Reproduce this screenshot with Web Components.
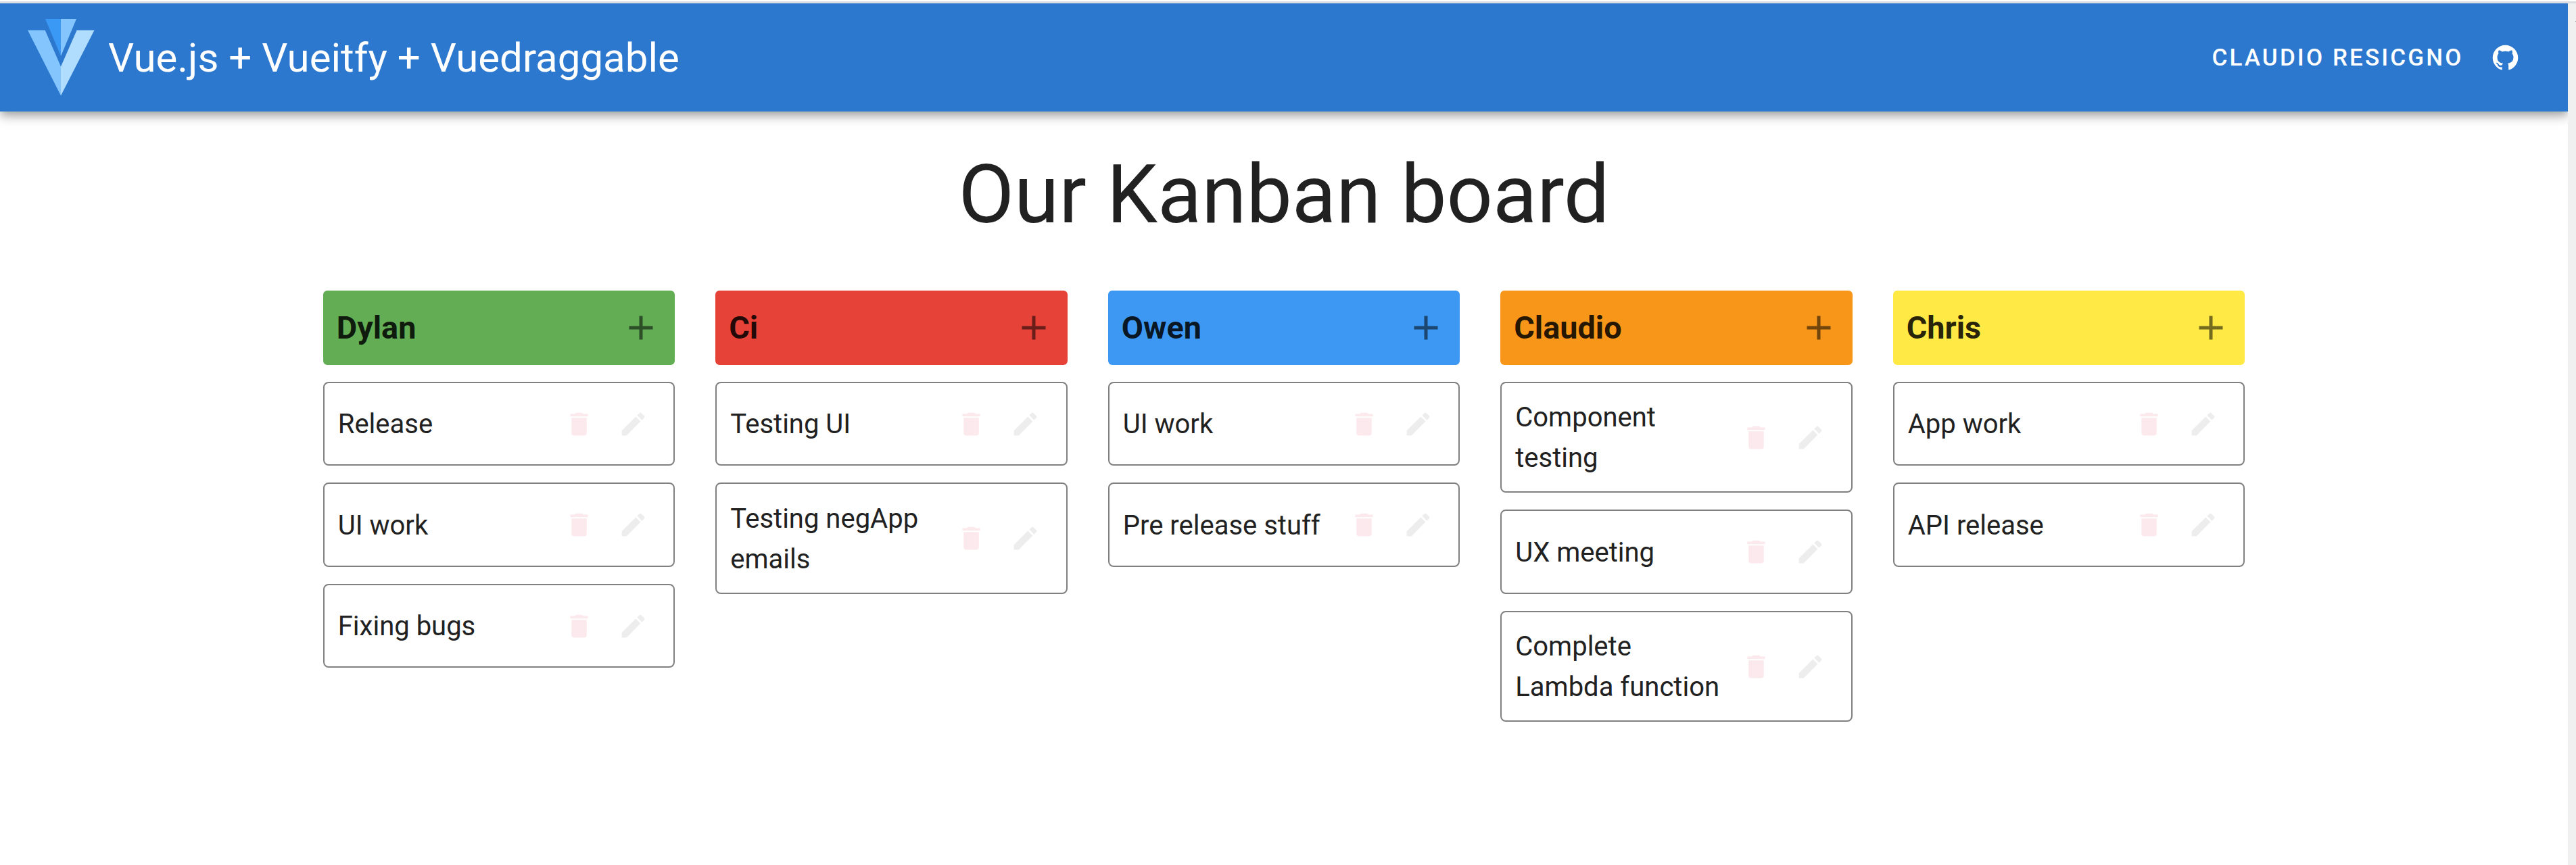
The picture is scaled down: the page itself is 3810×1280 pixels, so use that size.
<!DOCTYPE html>
<html lang="en"><head><meta charset="utf-8"><title>Kanban</title>
<style>html,body{margin:0;height:100%;overflow:hidden;background:#fff}</style></head>
<body>
<kanban-app></kanban-app>
<script>
const define=(name,html)=>{
  const t=document.createElement('template');t.innerHTML=html;
  customElements.define(name,class extends HTMLElement{
    constructor(){super();this.attachShadow({mode:'open'}).append(t.content.cloneNode(true));}
  });
};

const ICONS={
  plus:'M19,13H13V19H11V13H5V11H11V5H13V11H19V13Z',
  delete:'M19,4H15.5L14.5,3H9.5L8.5,4H5V6H19M6,19A2,2 0 0,0 8,21H16A2,2 0 0,0 18,19V7H6V19Z',
  pencil:'M20.71,7.04C21.1,6.65 21.1,6 20.71,5.63L18.37,3.29C18,2.9 17.35,2.9 16.96,3.29L15.12,5.12L18.87,8.87M3,17.25V21H6.75L17.81,9.93L14.06,6.18L3,17.25Z',
  github:'M12,2A10,10 0 0,0 2,12C2,16.42 4.87,20.17 8.84,21.5C9.34,21.58 9.5,21.27 9.5,21C9.5,20.77 9.5,20.14 9.5,19.31C6.73,19.91 6.14,17.97 6.14,17.97C5.68,16.81 5.03,16.5 5.03,16.5C4.12,15.88 5.1,15.9 5.1,15.9C6.1,15.97 6.63,16.93 6.63,16.93C7.5,18.45 8.97,18 9.54,17.76C9.63,17.11 9.89,16.67 10.17,16.42C7.95,16.17 5.62,15.31 5.62,11.5C5.62,10.39 6,9.5 6.65,8.79C6.55,8.54 6.2,7.5 6.75,6.15C6.75,6.15 7.59,5.88 9.5,7.17C10.29,6.95 11.15,6.84 12,6.84C12.85,6.84 13.71,6.95 14.5,7.17C16.41,5.88 17.25,6.15 17.25,6.15C17.8,7.5 17.45,8.54 17.35,8.79C18,9.5 18.38,10.39 18.38,11.5C18.38,15.32 16.04,16.16 13.81,16.41C14.17,16.72 14.5,17.33 14.5,18.26C14.5,19.6 14.5,20.68 14.5,21C14.5,21.27 14.66,21.59 15.17,21.5C19.14,20.16 22,16.42 22,12A10,10 0 0,0 12,2Z'
};
customElements.define('md-icon',class extends HTMLElement{
  constructor(){super();this.attachShadow({mode:'open'});}
  connectedCallback(){
    this.shadowRoot.innerHTML=`<style>:host{display:block;flex:none;width:var(--size,45px);height:var(--size,45px)}svg{display:block;width:100%;height:100%}</style>
    <svg viewBox="0 0 24 24" fill="currentColor"><path d="${ICONS[this.getAttribute('name')]}"/></svg>`;
  }
});

define('brand-logo',`<style>:host{display:block;width:100px;height:115px;flex:none}svg{display:block}</style>
<svg width="100" height="115" viewBox="40 28 100 115">
<path fill="#3a99f5" d="M67 28H90V83Z"/><path fill="#84c5fe" d="M90 28H113L90 83Z"/>
<path fill="#84c5fe" d="M41 44.7H66.7L90 98.5V141.5Z"/><path fill="#b0ddfe" d="M139.5 44.7H113.6L90 98.5V141.5Z"/></svg>`);

define('app-toolbar',`<style>
:host{display:flex;align-items:center;height:160px;box-sizing:border-box;padding:0 70px 0 40px;background:#2d78cf;color:#fff;
 box-shadow:0 5px 10px -2.5px rgba(0,0,0,.2),0 10px 12.5px rgba(0,0,0,.14),0 2.5px 25px rgba(0,0,0,.12)}
.title{font-size:60px;line-height:90px;margin-left:20px;padding-top:2px;white-space:nowrap}
.spacer{flex:1}
.user{display:flex;align-items:center;gap:39.5px;font-size:35px;font-weight:500;letter-spacing:3.125px;line-height:45px}
</style><brand-logo></brand-logo><div class="title"><slot></slot></div><div class="spacer"></div>
<div class="user"><slot name="user"></slot><md-icon name="github"></md-icon></div>`);

define('task-card',`<style>
:host{display:flex;align-items:center;box-sizing:border-box;border:2px solid #808080;border-radius:8px;padding:20.25px 20px;color:#212121;font-size:40px;line-height:60px}
.text{flex:1;min-width:0;margin:1.2px 0 -1.2px}
.btn{flex:none;width:80px;height:80px;display:flex;align-items:center;justify-content:center}
.del{color:#fce9ed}.edit{color:#ededed}
</style><div class="text"><slot></slot></div>
<div class="btn del"><md-icon name="delete"></md-icon></div><div class="btn edit"><md-icon name="pencil"></md-icon></div>`);

define('board-column',`<style>
:host{display:flex;flex-direction:column;gap:25px;flex:1 1 0;min-width:0}
header{display:flex;align-items:center;justify-content:space-between;height:110px;box-sizing:border-box;padding:0 20px;border-radius:6px;background:var(--bg);color:rgba(0,0,0,.87)}
h3{margin:0;font-size:46.8px;line-height:70px;font-weight:700}
md-icon{--size:60px;color:rgba(0,0,0,.54)}
</style><header><h3><slot name="name"></slot></h3><md-icon name="plus"></md-icon></header><slot></slot>`);

define('kanban-app',`<style>
:host{display:flex;flex-direction:column;height:1280px;font-family:Roboto,sans-serif;background:#fff}
.edge{flex:none;height:3px;margin-top:2px;background:#dadce0}
.view{display:flex;flex:1;min-height:0}
.page{flex:1;min-width:0;overflow:hidden}
.track{flex:none;width:12px;background:#f0f0f0;display:flex;justify-content:flex-end}
.track i{width:1px;height:1px;margin-top:26px;background:#8a8a8a}
h1{margin:63px 0 0;font-size:120px;line-height:120px;font-weight:400;text-align:center;color:#212121}
.board{display:flex;align-items:flex-start;gap:60px;width:2842.5px;margin:81.8px auto 0}
</style>
<div class="edge"></div>
<div class="view"><div class="page">
<app-toolbar>Vue.js + Vueitfy + Vuedraggable<span slot="user">CLAUDIO RESICGNO</span></app-toolbar>
<h1>Our Kanban board</h1>
<div class="board">
<board-column style="--bg:#63ad55"><span slot="name">Dylan</span><task-card>Release</task-card><task-card>UI work</task-card><task-card>Fixing bugs</task-card></board-column>
<board-column style="--bg:#e64238"><span slot="name">Ci</span><task-card>Testing UI</task-card><task-card>Testing negApp emails</task-card></board-column>
<board-column style="--bg:#3c98f2"><span slot="name">Owen</span><task-card>UI work</task-card><task-card>Pre release stuff</task-card></board-column>
<board-column style="--bg:#f79618"><span slot="name">Claudio</span><task-card>Component testing</task-card><task-card>UX meeting</task-card><task-card>Complete Lambda function</task-card></board-column>
<board-column style="--bg:#ffe945"><span slot="name">Chris</span><task-card>App work</task-card><task-card>API release</task-card></board-column>
</div></div><div class="track"><i></i></div></div>`);
</script>
</body></html>
